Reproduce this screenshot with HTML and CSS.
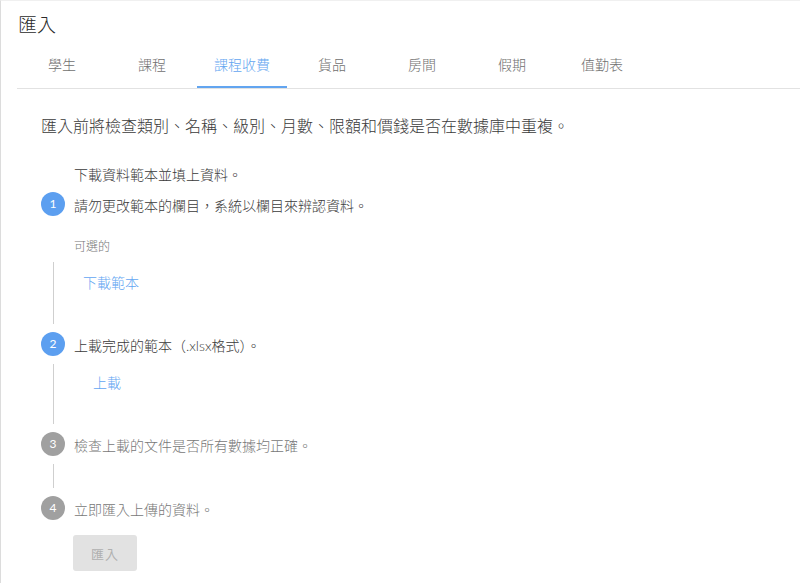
FILE: index.html
```html
<!DOCTYPE html>
<html>
<head>
  <meta charset="UTF-8">
  <title>匯入</title>
  <link rel="stylesheet" href="styles.css">
</head>
<body>
  <div class="page">
    <h1 class="title">匯入</h1>

    <div class="tabs">
      <div class="tab">學生</div>
      <div class="tab">課程</div>
      <div class="tab active">課程收費</div>
      <div class="tab">貨品</div>
      <div class="tab">房間</div>
      <div class="tab">假期</div>
      <div class="tab">值勤表</div>
    </div>

    <div class="content">
      <p class="intro">匯入前將檢查類別、名稱、級別、月數、限額和價錢是否在數據庫中重複。</p>

      <!-- 第一步 -->
      <div class="step">
        <div class="step-pre">下載資料範本並填上資料。</div>
        <div class="step-head">
          <span class="step-icon">1</span>
          <span class="step-title">請勿更改範本的欄目，系統以欄目來辨認資料。</span>
        </div>
        <div class="step-note">可選的</div>
        <div class="step-body first">
          <div class="rail rail-long"></div>
          <div class="step-action"><a class="link" href="#">下載範本</a></div>
        </div>
      </div>

      <!-- 第二步 -->
      <div class="step">
        <div class="step-head">
          <span class="step-icon">2</span>
          <span class="step-title">上載完成的範本（.xlsx格式）。</span>
        </div>
        <div class="step-body">
          <div class="rail rail-mid"></div>
          <div class="step-action"><a class="link upload" href="#">上載</a></div>
        </div>
      </div>

      <!-- 第三步 -->
      <div class="step pending">
        <div class="step-head">
          <span class="step-icon">3</span>
          <span class="step-title">檢查上載的文件是否所有數據均正確。</span>
        </div>
        <div class="step-body">
          <div class="rail rail-short"></div>
        </div>
      </div>

      <!-- 第四步 -->
      <div class="step pending">
        <div class="step-head">
          <span class="step-icon">4</span>
          <span class="step-title">立即匯入上傳的資料。</span>
        </div>
        <div class="step-last">
          <button class="import-btn" disabled>匯入</button>
        </div>
      </div>
    </div>
  </div>
</body>
</html>
```

FILE: styles.css
```css
html, body {
  margin: 0;
  padding: 0;
  background: #fff;
}
body {
  font-family: Lato, "Noto Sans CJK TC", sans-serif;
  font-weight: 300;
  color: #333;
}
.page {
  box-sizing: border-box;
  height: 583px;
  border-left: 1px solid #dcdcdc;
  border-top: 1px solid #f0f0f0;
  padding-left: 16px;
  overflow: hidden;
}
.title {
  margin: 0;
  padding: 12px 0 0 1px;
  font-size: 19px;
  font-weight: 300;
  line-height: 24px;
  color: #2a2a2a;
}

/* 分頁 */
.tabs {
  display: flex;
  margin-top: 5px;
  border-bottom: 1px solid #e2e2e2;
}
.tab {
  width: 90px;
  text-align: center;
  font-size: 14px;
  line-height: 20px;
  padding: 13px 0 11px;
  color: #707070;
  border-bottom: 2px solid transparent;
}
.tab.active {
  color: #62a5f0;
  border-bottom-color: #62a5f0;
}

.content {
  padding-left: 24px;
}
.intro {
  margin: 25px 0 0;
  font-size: 16px;
  line-height: 24px;
  color: #3a3a3a;
}

/* 步驟 */
.step {
  display: grid;
  grid-template-columns: 24px 1fr;
  column-gap: 9px;
}
.step-pre {
  grid-column: 2;
  margin-top: 27px;
  font-size: 14px;
  line-height: 20px;
  color: #3a3a3a;
}
.step-head {
  grid-column: 1 / 3;
  display: flex;
  align-items: flex-start;
  gap: 9px;
  height: 24px;
}
.step-pre + .step-head {
  margin-top: 7px;
}
.step-icon {
  flex: none;
  width: 24px;
  height: 24px;
  border-radius: 50%;
  background: #5c9ff0;
  color: #fff;
  font-size: 12px;
  font-weight: 400;
  line-height: 24px;
  text-align: center;
}
.step-title {
  font-size: 14px;
  line-height: 24px;
  margin-top: 2px;
  color: #3a3a3a;
}
.step-note {
  grid-column: 2;
  margin-top: 22px;
  font-size: 12px;
  line-height: 18px;
  color: #777;
}
.step-body {
  grid-column: 1 / 3;
  display: grid;
  grid-template-columns: 24px 1fr;
  column-gap: 9px;
  padding: 8px 0;
}
.step-body.first {
  padding-top: 6px;
}
.rail {
  width: 1px;
  background: #cfcfcf;
  justify-self: center;
}
.rail-long { height: 62px; }
.rail-mid { height: 60px; }
.rail-short { height: 24px; }

.step-action {
  padding-top: 10px;
}
.link {
  display: inline-block;
  margin-left: 9px;
  font-size: 14px;
  line-height: 20px;
  color: #62a5f2;
  text-decoration: none;
}
.step-body .upload {
  margin-left: 19px;
}
.step:nth-child(3) .step-action {
  padding-top: 8px;
}

.step.pending .step-icon {
  background: #a0a0a0;
}
.step.pending .step-title {
  color: #777;
}
.step-last {
  grid-column: 2;
  padding-top: 15px;
}
.import-btn {
  margin-left: -1px;
  width: 64px;
  height: 36px;
  border: none;
  border-radius: 3px;
  background: #e2e2e2;
  color: #b0b0b0;
  font-family: Lato, "Noto Sans CJK TC", sans-serif;
  font-size: 13px;
  letter-spacing: 1px;
}
```
